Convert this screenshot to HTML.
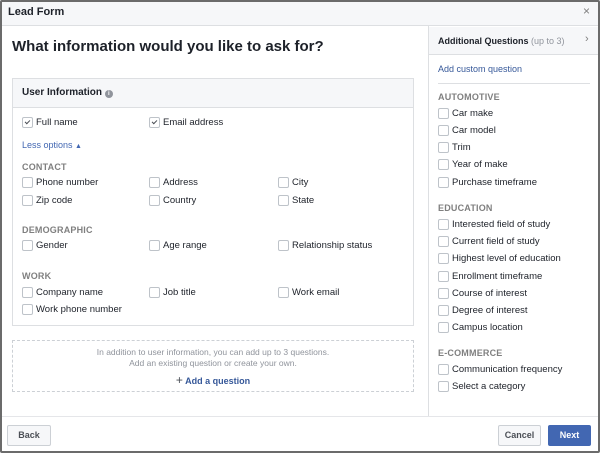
<!DOCTYPE html>
<html><head><meta charset="utf-8"><style>
*,*:before,*:after{box-sizing:border-box;margin:0;padding:0}
body{width:600px;height:453px;overflow:hidden;background:#fff;font-family:"Liberation Sans",Arial,sans-serif;color:#1d2129;position:relative}
.frame{position:absolute;left:0;top:0;width:600px;height:453px;border:2px solid #6b6b6b;border-radius:2px}
.a{position:absolute;white-space:nowrap}
.it{position:absolute;font-size:9.5px;line-height:12px;height:12px;padding-left:14px;color:#1d2129;white-space:nowrap}
.it:before{content:"";position:absolute;left:0;top:0;width:11px;height:11px;border:1px solid #bec3c9;border-radius:2px;background:#fff}
.ck:after{content:"";position:absolute;left:4px;top:2px;width:3px;height:5px;border:solid #4b4f56;border-width:0 1.3px 1.3px 0;transform:rotate(45deg)}
.sec{position:absolute;font-size:9px;font-weight:bold;color:#7f7f7f;letter-spacing:0.2px}
</style></head><body>
<div class="a" style="left:0;top:0;width:600px;height:26px;background:#f6f7f9;border-bottom:1px solid #dddfe2"></div>
<div class="a" style="left:8px;top:6px;font-size:11px;font-weight:bold">Lead Form</div>
<div class="a" style="left:583px;top:4px;font-size:12px;color:#7f7f7f">×</div>
<div class="a" style="left:12px;top:38px;font-size:15px;font-weight:bold">What information would you like to ask for?</div>
<div class="a" style="left:12px;top:78px;width:402px;height:248px;border:1px solid #dddfe2"></div>
<div class="a" style="left:13px;top:79px;width:400px;height:29px;background:#f6f7f9;border-bottom:1px solid #dddfe2"></div>
<div class="a" style="left:22px;top:87px;font-size:10px;font-weight:bold">User Information <span style="display:inline-block;width:8px;height:8px;border-radius:50%;background:#90949c;color:#fff;font-size:6px;line-height:8px;text-align:center;vertical-align:0">i</span></div>
<div class="it ck" style="left:22px;top:117px">Full name</div>
<div class="it ck" style="left:149px;top:117px">Email address</div>
<div class="a" style="left:22px;top:140px;font-size:9px;color:#4267b2">Less options <span style="font-size:7px">▲</span></div>
<div class="sec" style="left:22px;top:162px">CONTACT</div>
<div class="it" style="left:22px;top:177px">Phone number</div>
<div class="it" style="left:149px;top:177px">Address</div>
<div class="it" style="left:278px;top:177px">City</div>
<div class="it" style="left:22px;top:195px">Zip code</div>
<div class="it" style="left:149px;top:195px">Country</div>
<div class="it" style="left:278px;top:195px">State</div>
<div class="sec" style="left:22px;top:225px">DEMOGRAPHIC</div>
<div class="it" style="left:22px;top:240px">Gender</div>
<div class="it" style="left:149px;top:240px">Age range</div>
<div class="it" style="left:278px;top:240px">Relationship status</div>
<div class="sec" style="left:22px;top:271px">WORK</div>
<div class="it" style="left:22px;top:287px">Company name</div>
<div class="it" style="left:149px;top:287px">Job title</div>
<div class="it" style="left:278px;top:287px">Work email</div>
<div class="it" style="left:22px;top:304px">Work phone number</div>
<div class="a" style="left:12px;top:340px;width:402px;height:52px;border:1px dashed #ccd0d5"></div>
<div class="a" style="left:12px;top:347px;width:402px;text-align:center;font-size:8.5px;line-height:11px;color:#90949c">In addition to user information, you can add up to 3 questions.<br>Add an existing question or create your own.</div>
<div class="a" style="left:12px;top:373px;width:402px;text-align:center;font-size:9px;font-weight:bold;color:#365899"><span style="font-size:12px;font-weight:normal;color:#4b4f56">+</span> Add a question</div>
<div class="a" style="left:428px;top:26px;width:1px;height:390px;background:#dddfe2"></div>
<div class="a" style="left:429px;top:27px;width:169px;height:28px;background:#f6f7f9;border-bottom:1px solid #dddfe2"></div>
<div class="a" style="left:438px;top:36px;font-size:9px;font-weight:bold">Additional Questions <span style="font-weight:normal;color:#90949c">(up to 3)</span></div>
<div class="a" style="left:585px;top:33px;font-size:11px;color:#7f7f7f">›</div>
<div class="a" style="left:438px;top:64px;font-size:9px;color:#365899">Add custom question</div>
<div class="a" style="left:438px;top:83px;width:152px;height:1px;background:#dddfe2"></div>
<div class="sec" style="left:438px;top:92px">AUTOMOTIVE</div>
<div class="it" style="left:438px;top:108px">Car make</div>
<div class="it" style="left:438px;top:125px">Car model</div>
<div class="it" style="left:438px;top:142px">Trim</div>
<div class="it" style="left:438px;top:159px">Year of make</div>
<div class="it" style="left:438px;top:177px">Purchase timeframe</div>
<div class="sec" style="left:438px;top:203px">EDUCATION</div>
<div class="it" style="left:438px;top:219px">Interested field of study</div>
<div class="it" style="left:438px;top:236px">Current field of study</div>
<div class="it" style="left:438px;top:253px">Highest level of education</div>
<div class="it" style="left:438px;top:271px">Enrollment timeframe</div>
<div class="it" style="left:438px;top:288px">Course of interest</div>
<div class="it" style="left:438px;top:305px">Degree of interest</div>
<div class="it" style="left:438px;top:322px">Campus location</div>
<div class="sec" style="left:438px;top:348px">E-COMMERCE</div>
<div class="it" style="left:438px;top:364px">Communication frequency</div>
<div class="it" style="left:438px;top:381px">Select a category</div>
<div class="a" style="left:0;top:416px;width:600px;height:1px;background:#e5e6e9"></div>
<div class="a" style="left:7px;top:425px;width:44px;height:21px;border:1px solid #ccd0d5;border-radius:2px;background:#f6f7f9;font-size:9px;font-weight:bold;color:#4b4f56;text-align:center;line-height:19px">Back</div>
<div class="a" style="left:498px;top:425px;width:43px;height:21px;border:1px solid #ccd0d5;border-radius:2px;background:#f6f7f9;font-size:9px;font-weight:bold;color:#4b4f56;text-align:center;line-height:19px">Cancel</div>
<div class="a" style="left:548px;top:425px;width:43px;height:21px;border:1px solid #4267b2;border-radius:2px;background:#4267b2;font-size:9px;font-weight:bold;color:#fff;text-align:center;line-height:19px">Next</div>
<div class="frame"></div>
</body></html>
